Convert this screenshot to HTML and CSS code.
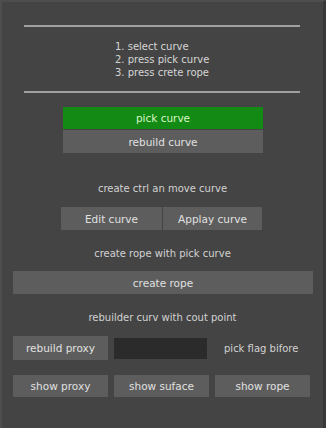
FILE: index.html
```html
<!DOCTYPE html>
<html lang="en">
<head>
    <meta charset="UTF-8">
    <meta name="viewport" content="width=device-width, initial-scale=1.0">
    <title>Rope Tool</title>
    <link rel="stylesheet" href="styles.css">
</head>
<body>
    <div class="panel">
        <div class="sep sep-top"></div>
        <div class="steps">
            <div>1. select curve</div>
            <div>2. press pick curve</div>
            <div>3. press crete rope</div>
        </div>
        <div class="sep sep-bottom"></div>

        <div class="pick-group">
            <button class="btn btn-green">pick curve</button>
            <button class="btn">rebuild curve</button>
        </div>

        <p class="label label-ctrl">create ctrl an move curve</p>
        <div class="row-two">
            <button class="btn btn-edit">Edit curve</button>
            <button class="btn btn-apply">Applay curve</button>
        </div>

        <p class="label label-rope">create rope with pick curve</p>
        <button class="btn btn-wide">create rope</button>

        <p class="label label-rebuild">rebuilder curv with cout point</p>
        <div class="row-proxy">
            <button class="btn btn-third">rebuild proxy</button>
            <div class="field"></div>
            <span class="hint">pick flag bifore</span>
        </div>
        <div class="row-show">
            <button class="btn btn-third">show proxy</button>
            <button class="btn btn-third">show suface</button>
            <button class="btn btn-third">show rope</button>
        </div>
    </div>
</body>
</html>
```
FILE: styles.css
```css
body {
    margin: 0;
    background-color: #3a3a3a;
    font-family: 'DejaVu Sans', 'Open Sans', sans-serif;
    font-size: 10px;
    color: #d2d2d2;
}
.panel {
    box-sizing: border-box;
    width: 326px;
    height: 428px;
    padding: 0 11px;
    background-color: #444444;
    border-top: 2px solid #4e4e4e;
    border-left: 2px solid #4e4e4e;
    border-right: 3px solid #383838;
    display: flex;
    flex-direction: column;
    align-items: flex-start;
}
.sep {
    width: 276px;
    height: 2px;
    margin-left: 11px;
    background-color: #a0a0a0;
}
.sep-top {
    margin-top: 23px;
}
.sep-bottom {
    margin-top: 12px;
}
.steps {
    margin-top: 13px;
    margin-left: 102px;
    line-height: 13px;
    color: #d6d6d6;
}
.btn {
    display: block;
    box-sizing: border-box;
    height: 23px;
    padding: 0;
    border: none;
    background-color: #5d5d5d;
    color: #e0e0e0;
    font-family: inherit;
    font-size: 10.5px;
}
.pick-group {
    width: 200px;
    margin-top: 14px;
    margin-left: 50px;
    display: flex;
    flex-direction: column;
    gap: 1px;
}
.btn-green {
    height: 22px;
    background-color: #138a13;
    color: #d8f5c8;
}
.label {
    align-self: stretch;
    margin: 0;
    text-align: center;
    line-height: 14px;
}
.label-ctrl {
    margin-top: 29px;
}
.row-two {
    margin-top: 11px;
    margin-left: 48px;
    display: flex;
    gap: 1px;
}
.btn-edit {
    width: 101px;
}
.btn-apply {
    width: 99px;
}
.label-rope {
    margin-top: 17px;
}
.btn-wide {
    width: 300px;
    margin-top: 10px;
}
.label-rebuild {
    margin-top: 17px;
}
.row-proxy {
    margin-top: 11px;
    display: flex;
    align-items: center;
}
.row-proxy .btn-third {
    height: 24px;
}
.field {
    width: 93px;
    height: 21px;
    margin-left: 6px;
    background-color: #2b2b2b;
}
.hint {
    margin-left: 17px;
}
.row-show {
    margin-top: 15px;
    display: flex;
    gap: 6px;
}
.btn-third {
    width: 95px;
    height: 22px;
}
```
